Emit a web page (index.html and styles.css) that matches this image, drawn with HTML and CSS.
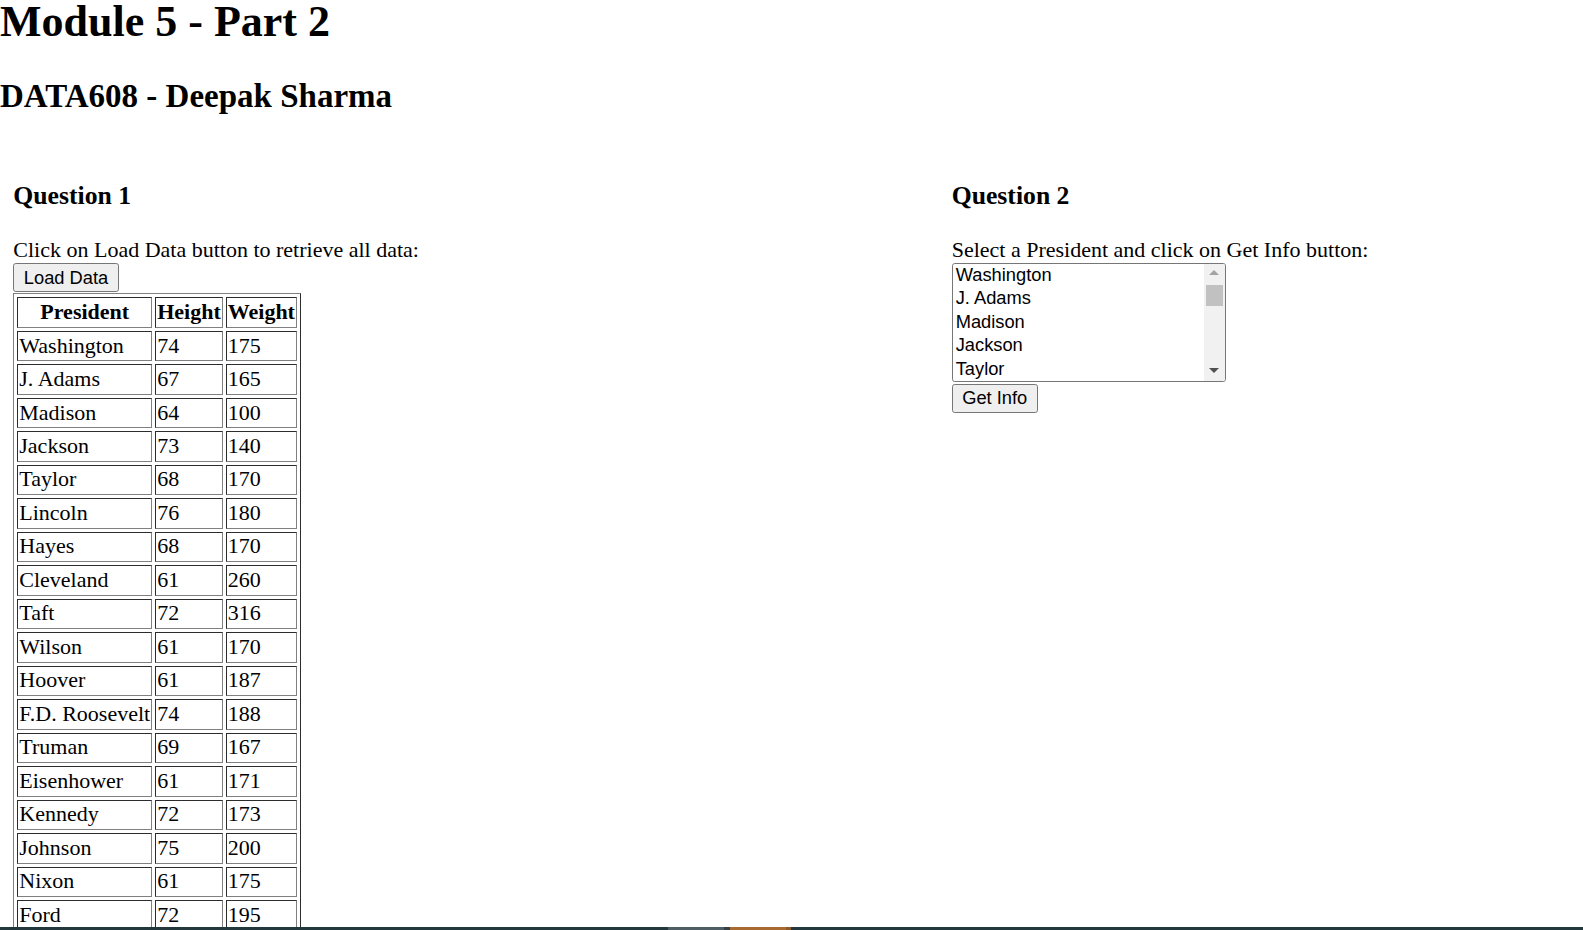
FILE: index.html
```html
<!DOCTYPE html>
<html lang="en">
<head>
<meta charset="utf-8">
<title>Module 5 - Part 2</title>
<link rel="stylesheet" href="styles.css">
</head>
<body>
<h1 class="title">Module 5 - Part 2</h1>
<h2 class="subtitle">DATA608 - Deepak Sharma</h2>
<div class="questions">
  <section class="question q1">
    <h3 class="q-title">Question 1</h3>
    <p class="prompt">Click on Load Data button to retrieve all data:</p>
    <button class="btn btn-load" type="button">Load Data</button>
    <table class="data">
      <thead>
        <tr><th>President</th><th>Height</th><th>Weight</th></tr>
      </thead>
      <tbody>
        <tr><td>Washington</td><td>74</td><td>175</td></tr>
        <tr><td>J. Adams</td><td>67</td><td>165</td></tr>
        <tr><td>Madison</td><td>64</td><td>100</td></tr>
        <tr><td>Jackson</td><td>73</td><td>140</td></tr>
        <tr><td>Taylor</td><td>68</td><td>170</td></tr>
        <tr><td>Lincoln</td><td>76</td><td>180</td></tr>
        <tr><td>Hayes</td><td>68</td><td>170</td></tr>
        <tr><td>Cleveland</td><td>61</td><td>260</td></tr>
        <tr><td>Taft</td><td>72</td><td>316</td></tr>
        <tr><td>Wilson</td><td>61</td><td>170</td></tr>
        <tr><td>Hoover</td><td>61</td><td>187</td></tr>
        <tr><td>F.D. Roosevelt</td><td>74</td><td>188</td></tr>
        <tr><td>Truman</td><td>69</td><td>167</td></tr>
        <tr><td>Eisenhower</td><td>61</td><td>171</td></tr>
        <tr><td>Kennedy</td><td>72</td><td>173</td></tr>
        <tr><td>Johnson</td><td>75</td><td>200</td></tr>
        <tr><td>Nixon</td><td>61</td><td>175</td></tr>
        <tr><td>Ford</td><td>72</td><td>195</td></tr>
      </tbody>
    </table>
  </section>
  <section class="question q2">
    <h3 class="q-title">Question 2</h3>
    <p class="prompt">Select a President and click on Get Info button:</p>
    <div class="listbox" role="listbox">
      <ul class="options">
        <li class="option">Washington</li>
        <li class="option">J. Adams</li>
        <li class="option">Madison</li>
        <li class="option">Jackson</li>
        <li class="option">Taylor</li>
      </ul>
      <div class="scrollbar">
        <div class="sb-btn"><span class="arrow-up"></span></div>
        <div class="sb-track"><div class="sb-thumb"></div></div>
        <div class="sb-btn"><span class="arrow-down"></span></div>
      </div>
    </div>
    <button class="btn btn-info" type="button">Get Info</button>
  </section>
</div>
<div class="taskbar">
  <span class="seg seg-dark-a"></span>
  <span class="seg seg-grey"></span>
  <span class="seg seg-gap"></span>
  <span class="seg seg-orange"></span>
  <span class="seg seg-orange-edge"></span>
  <span class="seg seg-dark-b"></span>
</div>
</body>
</html>
```

FILE: styles.css
```css
html, body {
  margin: 0;
  padding: 0;
  background: #ffffff;
}

body {
  font-family: "Liberation Serif", "Times New Roman", serif;
  font-size: 22px;
  color: #000000;
}

.title {
  font-size: 44px;
  line-height: 44px;
  font-weight: bold;
  margin: 0;
}

.subtitle {
  font-size: 33px;
  line-height: 33px;
  font-weight: bold;
  margin: 36.4px 0 0;
}

.questions {
  display: flex;
  padding-left: 13.3px;
  margin-top: 67.9px;
}

.q1 {
  width: 938.4px;
  flex: none;
}

.q2 {
  flex: 1;
}

.q-title {
  font-size: 25.7px;
  line-height: 30px;
  font-weight: bold;
  margin: 0 0 26.1px;
}

.prompt {
  font-size: 22px;
  line-height: 25px;
  margin: 0;
}

.btn {
  display: block;
  margin-top: 0.9px;
  height: 29px;
  padding: 0 9.5px;
  font-family: "Liberation Sans", Arial, sans-serif;
  font-size: 18.3px;
  color: #000000;
  background: #efefef;
  border: 1px solid #767676;
  border-radius: 2.75px;
  box-sizing: border-box;
}

.data {
  border-collapse: separate;
  border-spacing: 3px;
  border: 1px outset #808080;
  margin: 1px 0 0;
  font-size: 22px;
}

.data th,
.data td {
  border: 1px inset #808080;
  padding: 0.8px 1px 1.7px 1px;
  line-height: 26px;
  vertical-align: middle;
}

.data th {
  font-weight: bold;
  text-align: center;
}

.data td {
  text-align: left;
}

.listbox {
  margin-top: 0.6px;
  width: 274px;
  height: 119.5px;
  box-sizing: border-box;
  border: 1px solid #767676;
  border-radius: 2.75px;
  display: flex;
  overflow: hidden;
  background: #ffffff;
}

.options {
  list-style: none;
  margin: 0;
  padding: 0;
  flex: 1;
  font-family: "Liberation Sans", Arial, sans-serif;
  font-size: 18.3px;
}

.option {
  line-height: 22.1px;
  padding: 0 3px 1.4px;
}

.scrollbar {
  width: 20.6px;
  background: #f1f1f1;
  display: flex;
  flex-direction: column;
}

.sb-btn {
  height: 20.6px;
  display: flex;
  align-items: center;
  justify-content: center;
}

.arrow-up {
  width: 0;
  height: 0;
  border-left: 5px solid transparent;
  border-right: 5px solid transparent;
  border-bottom: 5px solid #a3a3a3;
  margin-top: -3px;
}

.arrow-down {
  width: 0;
  height: 0;
  border-left: 5px solid transparent;
  border-right: 5px solid transparent;
  border-top: 5px solid #505050;
  margin-top: -2px;
}

.sb-track {
  flex: 1;
}

.sb-thumb {
  height: 21px;
  margin: 0 1.8px 0 2px;
  background: #c1c1c1;
}

.btn-info {
  margin-top: 1.4px;
}

.taskbar {
  position: fixed;
  left: 0;
  right: 0;
  bottom: 0;
  height: 3px;
  display: flex;
  background: #22383d;
}

.seg {
  display: block;
  height: 100%;
}

.seg-dark-a { width: 668px; background: #22383d; }
.seg-grey { width: 56px; background: #4e5e64; }
.seg-gap { width: 6px; background: #363f44; }
.seg-orange { width: 56px; background: #a86a2e; }
.seg-orange-edge { width: 5px; background: #8f5a2a; }
.seg-dark-b { flex: 1; background: #22383d; }
```
